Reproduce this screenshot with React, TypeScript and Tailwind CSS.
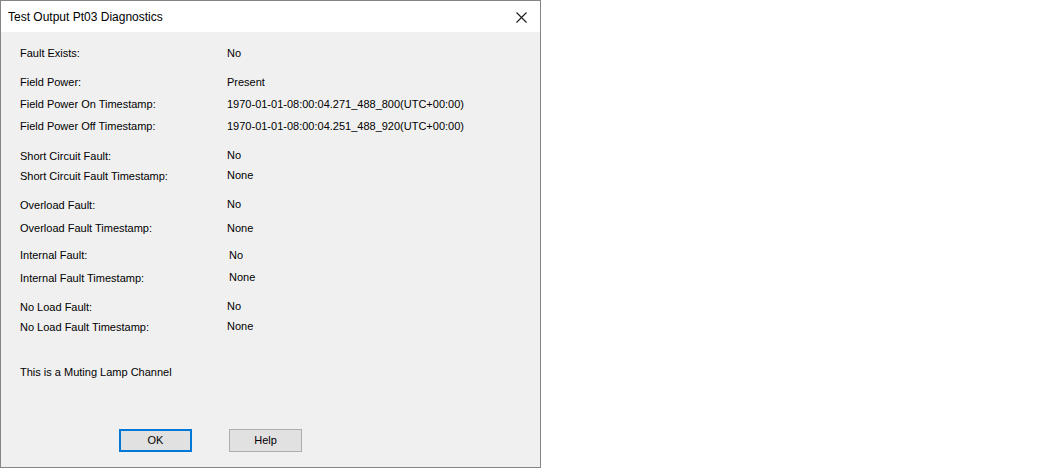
const rows: { label: string; value: string; mt: string; vx?: string; vy?: string }[] = [
  { label: 'Fault Exists:', value: 'No', mt: 'mt-[12px]' },
  { label: 'Field Power:', value: 'Present', mt: 'mt-[13px]' },
  { label: 'Field Power On Timestamp:', value: '1970-01-01-08:00:04.271_488_800(UTC+00:00)', mt: 'mt-[6px]' },
  { label: 'Field Power Off Timestamp:', value: '1970-01-01-08:00:04.251_488_920(UTC+00:00)', mt: 'mt-[6px]' },
  { label: 'Short Circuit Fault:', value: 'No', mt: 'mt-[14px]', vy: '-mt-px' },
  { label: 'Short Circuit Fault Timestamp:', value: 'None', mt: 'mt-[4px]', vy: '-mt-px' },
  { label: 'Overload Fault:', value: 'No', mt: 'mt-[13px]', vy: '-mt-px' },
  { label: 'Overload Fault Timestamp:', value: 'None', mt: 'mt-[7px]' },
  { label: 'Internal Fault:', value: 'No', mt: 'mt-[11px]', vx: 'ml-[2px]' },
  { label: 'Internal Fault Timestamp:', value: 'None', mt: 'mt-[7px]', vx: 'ml-[2px]', vy: '-mt-px' },
  { label: 'No Load Fault:', value: 'No', mt: 'mt-[13px]', vy: '-mt-px' },
  { label: 'No Load Fault Timestamp:', value: 'None', mt: 'mt-[4px]', vy: '-mt-px' },
];

export default function App() {
  return (
    <div className="w-[1050px] h-[469px] bg-white font-['Liberation_Sans',Arial,sans-serif] text-black">
      <div className="w-[541px] h-[468px] border border-[#858585] flex flex-col">
        {/* Title bar */}
        <div className="h-[31px] bg-white flex items-center justify-between pl-[7px] pr-[13px]">
          <span className="text-[12px] leading-none">Test Output Pt03 Diagnostics</span>
          <svg width="11" height="11" viewBox="0 0 11 11" className="mt-[1px]">
            <path d="M0.5 0.5 L10.5 10.5 M10.5 0.5 L0.5 10.5" stroke="#1a1a1a" strokeWidth="1.1" />
          </svg>
        </div>

        {/* Body */}
        <div className="flex-1 bg-[#f0f0f0] pl-[19px] pt-[1px] text-[11px] leading-[16px]">
          {rows.map((r) => (
            <div key={r.label} className={`flex ${r.mt}`}>
              <div className="w-[207px] shrink-0">{r.label}</div>
              <div className={`${r.vx ?? ''} ${r.vy ?? ''}`}>{r.value}</div>
            </div>
          ))}

          <div className="mt-[29px]">This is a Muting Lamp Channel</div>

          <div className="flex gap-[37px] mt-[49px] ml-[99px]">
            <button className="w-[73px] h-[23px] bg-[#e1e1e1] border-2 border-[#0078d7] text-[11px] leading-none">
              OK
            </button>
            <button className="w-[73px] h-[23px] bg-[#e1e1e1] border border-[#adadad] text-[11px] leading-none">
              Help
            </button>
          </div>
        </div>
      </div>
    </div>
  );
}
